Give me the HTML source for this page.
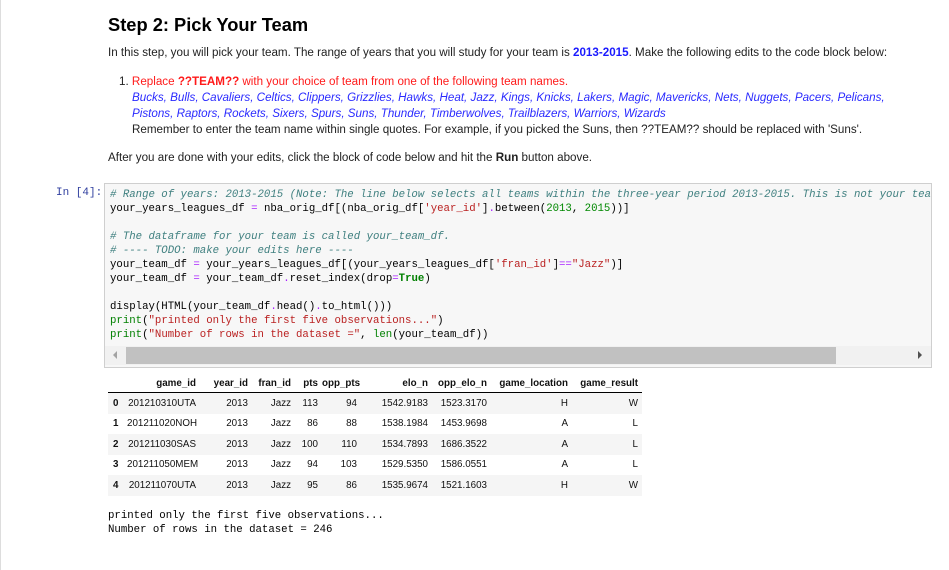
<!DOCTYPE html>
<html><head><meta charset="utf-8"><style>
body{margin:0;width:949px;height:570px;background:#fff;font-family:"Liberation Sans",Arial,sans-serif;overflow:hidden;position:relative;color:#000}
.lb{position:absolute;left:0;top:0;width:1px;height:570px;background:#ddd}
.t{position:absolute;white-space:nowrap;font-size:11.64px;color:#222}
h2{position:absolute;left:108px;top:14px;margin:0;font-size:18.3px;font-weight:bold;white-space:nowrap}
.code{position:absolute;left:104px;top:183px;width:826px;height:183px;background:#f7f7f7;border:1px solid #cfcfcf;overflow:hidden}
pre{margin:0;position:absolute;left:5px;top:4px;font-family:"Liberation Mono",monospace;font-size:10.7px;line-height:14px;color:#000}
.c{color:#408080;font-style:italic}.s{color:#ba2121}.k{color:#008000}.kb{color:#008000;font-weight:bold}.o{color:#aa22ff}.n{color:#080}
.in{position:absolute;left:56px;top:187px;font-family:"Liberation Mono",monospace;font-size:11px;color:#303f9f}
table{position:absolute;left:108px;top:374px;border-collapse:collapse;font-size:9.8px;color:#111;table-layout:fixed;width:534px}
td,th{text-align:right;padding:0 4px 0 0;height:20.5px;white-space:nowrap;overflow:visible}
thead th{font-weight:bold;border-bottom:1px solid #000;height:18px}
tbody th{text-align:left;padding-left:5px}
tbody tr:nth-child(odd){background:#f5f5f5}
.out{position:absolute;left:108px;top:509px;font-family:"Liberation Mono",monospace;font-size:10.7px;line-height:14px;margin:0}
</style></head><body>
<div class="lb"></div>
<h2>Step 2: Pick Your Team</h2>
<div class="t" style="left:108px;top:46px">In this step, you will pick your team. The range of years that you will study for your team is <b style="color:#1a1aff">2013-2015</b>. Make the following edits to the code block below:</div>
<div class="t" style="left:119px;top:75px;color:#ff1a1a"><span style="color:#222">1.</span> Replace <b>??TEAM??</b> with your choice of team from one of the following team names.</div>
<div class="t" style="left:132px;top:91px;color:#2a2aff;font-style:italic">Bucks, Bulls, Cavaliers, Celtics, Clippers, Grizzlies, Hawks, Heat, Jazz, Kings, Knicks, Lakers, Magic, Mavericks, Nets, Nuggets, Pacers, Pelicans,</div>
<div class="t" style="left:132px;top:107px;color:#2a2aff;font-style:italic">Pistons, Raptors, Rockets, Sixers, Spurs, Suns, Thunder, Timberwolves, Trailblazers, Warriors, Wizards</div>
<div class="t" style="left:132px;top:123px">Remember to enter the team name within single quotes. For example, if you picked the Suns, then ??TEAM?? should be replaced with 'Suns'.</div>
<div class="t" style="left:108px;top:151px">After you are done with your edits, click the block of code below and hit the <b>Run</b> button above.</div>
<div class="in">In [4]:</div>
<div class="code"><pre><span class="c"># Range of years: 2013-2015 (Note: The line below selects all teams within the three-year period 2013-2015. This is not your team</span>
your_years_leagues_df <span class="o">=</span> nba_orig_df[(nba_orig_df[<span class="s">'year_id'</span>]<span class="o">.</span>between(<span class="n">2013</span>, <span class="n">2015</span>))]

<span class="c"># The dataframe for your team is called your_team_df.</span>
<span class="c"># ---- TODO: make your edits here ----</span>
your_team_df <span class="o">=</span> your_years_leagues_df[(your_years_leagues_df[<span class="s">'fran_id'</span>]<span class="o">==</span><span class="s">"Jazz"</span>)]
your_team_df <span class="o">=</span> your_team_df<span class="o">.</span>reset_index(drop<span class="o">=</span><span class="kb">True</span>)

display(HTML(your_team_df<span class="o">.</span>head()<span class="o">.</span>to_html()))
<span class="k">print</span>(<span class="s">"printed only the first five observations..."</span>)
<span class="k">print</span>(<span class="s">"Number of rows in the dataset ="</span>, <span class="k">len</span>(your_team_df))</pre>
<div style="position:absolute;left:0;top:162px;width:826px;height:19px;background:#f1f1f1"></div>
<div style="position:absolute;left:21px;top:163px;width:710px;height:17px;background:#c1c1c1"></div>
<div style="position:absolute;left:8px;top:167px;width:0;height:0;border-top:4px solid transparent;border-bottom:4px solid transparent;border-right:4px solid #a3a3a3"></div>
<div style="position:absolute;left:813px;top:167px;width:0;height:0;border-top:4px solid transparent;border-bottom:4px solid transparent;border-left:4px solid #505050"></div>
</div>
<table>
<colgroup><col style="width:19px"><col style="width:73px"><col style="width:52px"><col style="width:43px"><col style="width:27px"><col style="width:39px"><col style="width:71px"><col style="width:59px"><col style="width:81px"><col style="width:70px"></colgroup>
<thead><tr><th></th><th>game_id</th><th>year_id</th><th>fran_id</th><th>pts</th><th>opp_pts</th><th>elo_n</th><th>opp_elo_n</th><th>game_location</th><th>game_result</th></tr></thead>
<tbody>
<tr><th>0</th><td>201210310UTA</td><td>2013</td><td>Jazz</td><td>113</td><td>94</td><td>1542.9183</td><td>1523.3170</td><td>H</td><td>W</td></tr>
<tr><th>1</th><td>201211020NOH</td><td>2013</td><td>Jazz</td><td>86</td><td>88</td><td>1538.1984</td><td>1453.9698</td><td>A</td><td>L</td></tr>
<tr><th>2</th><td>201211030SAS</td><td>2013</td><td>Jazz</td><td>100</td><td>110</td><td>1534.7893</td><td>1686.3522</td><td>A</td><td>L</td></tr>
<tr><th>3</th><td>201211050MEM</td><td>2013</td><td>Jazz</td><td>94</td><td>103</td><td>1529.5350</td><td>1586.0551</td><td>A</td><td>L</td></tr>
<tr><th>4</th><td>201211070UTA</td><td>2013</td><td>Jazz</td><td>95</td><td>86</td><td>1535.9674</td><td>1521.1603</td><td>H</td><td>W</td></tr>
</tbody></table>
<pre class="out">printed only the first five observations...
Number of rows in the dataset = 246</pre>
</body></html>
